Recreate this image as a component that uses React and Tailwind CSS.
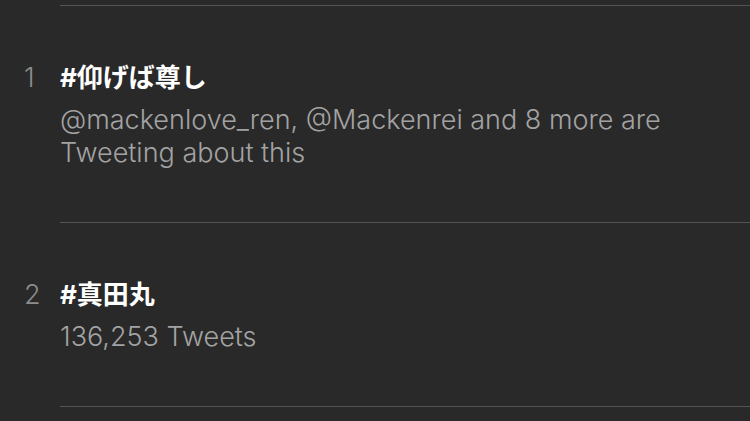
import React from 'react';

const trends = [
  {
    rank: 1,
    tag: '#仰げば尊し',
    lines: ['@mackenlove_ren, @Mackenrei and 8 more are', 'Tweeting about this'],
  },
  {
    rank: 2,
    tag: '#真田丸',
    lines: ['136,253 Tweets'],
  },
];

const font = { fontFamily: 'Inter, "Noto Sans CJK JP", sans-serif' };

function TrendRow({ trend }) {
  return (
    <div className="flex">
      <div className="w-[60px] shrink-0 pl-[24px] pt-[56px] text-[27px] leading-[32px] font-light text-[#8c8c8c]">
        {trend.rank}
      </div>
      <div className="flex-1 border-b border-[#545454] pt-[56px] pb-[53px]">
        <div className="text-[26px] leading-[32px] font-bold text-white">{trend.tag}</div>
        <div className="mt-[9px] text-[27px] leading-[33px] font-light text-[#a3a3a3]">
          {trend.lines.map((l) => (
            <div key={l}>{l}</div>
          ))}
        </div>
      </div>
    </div>
  );
}

export default function App() {
  return (
    <div className="w-[750px] h-[421px] overflow-hidden bg-[#292929]" style={font}>
      <div className="ml-[60px] h-[6px] border-b border-[#545454]" />
      {trends.map((t) => (
        <TrendRow key={t.rank} trend={t} />
      ))}
    </div>
  );
}
